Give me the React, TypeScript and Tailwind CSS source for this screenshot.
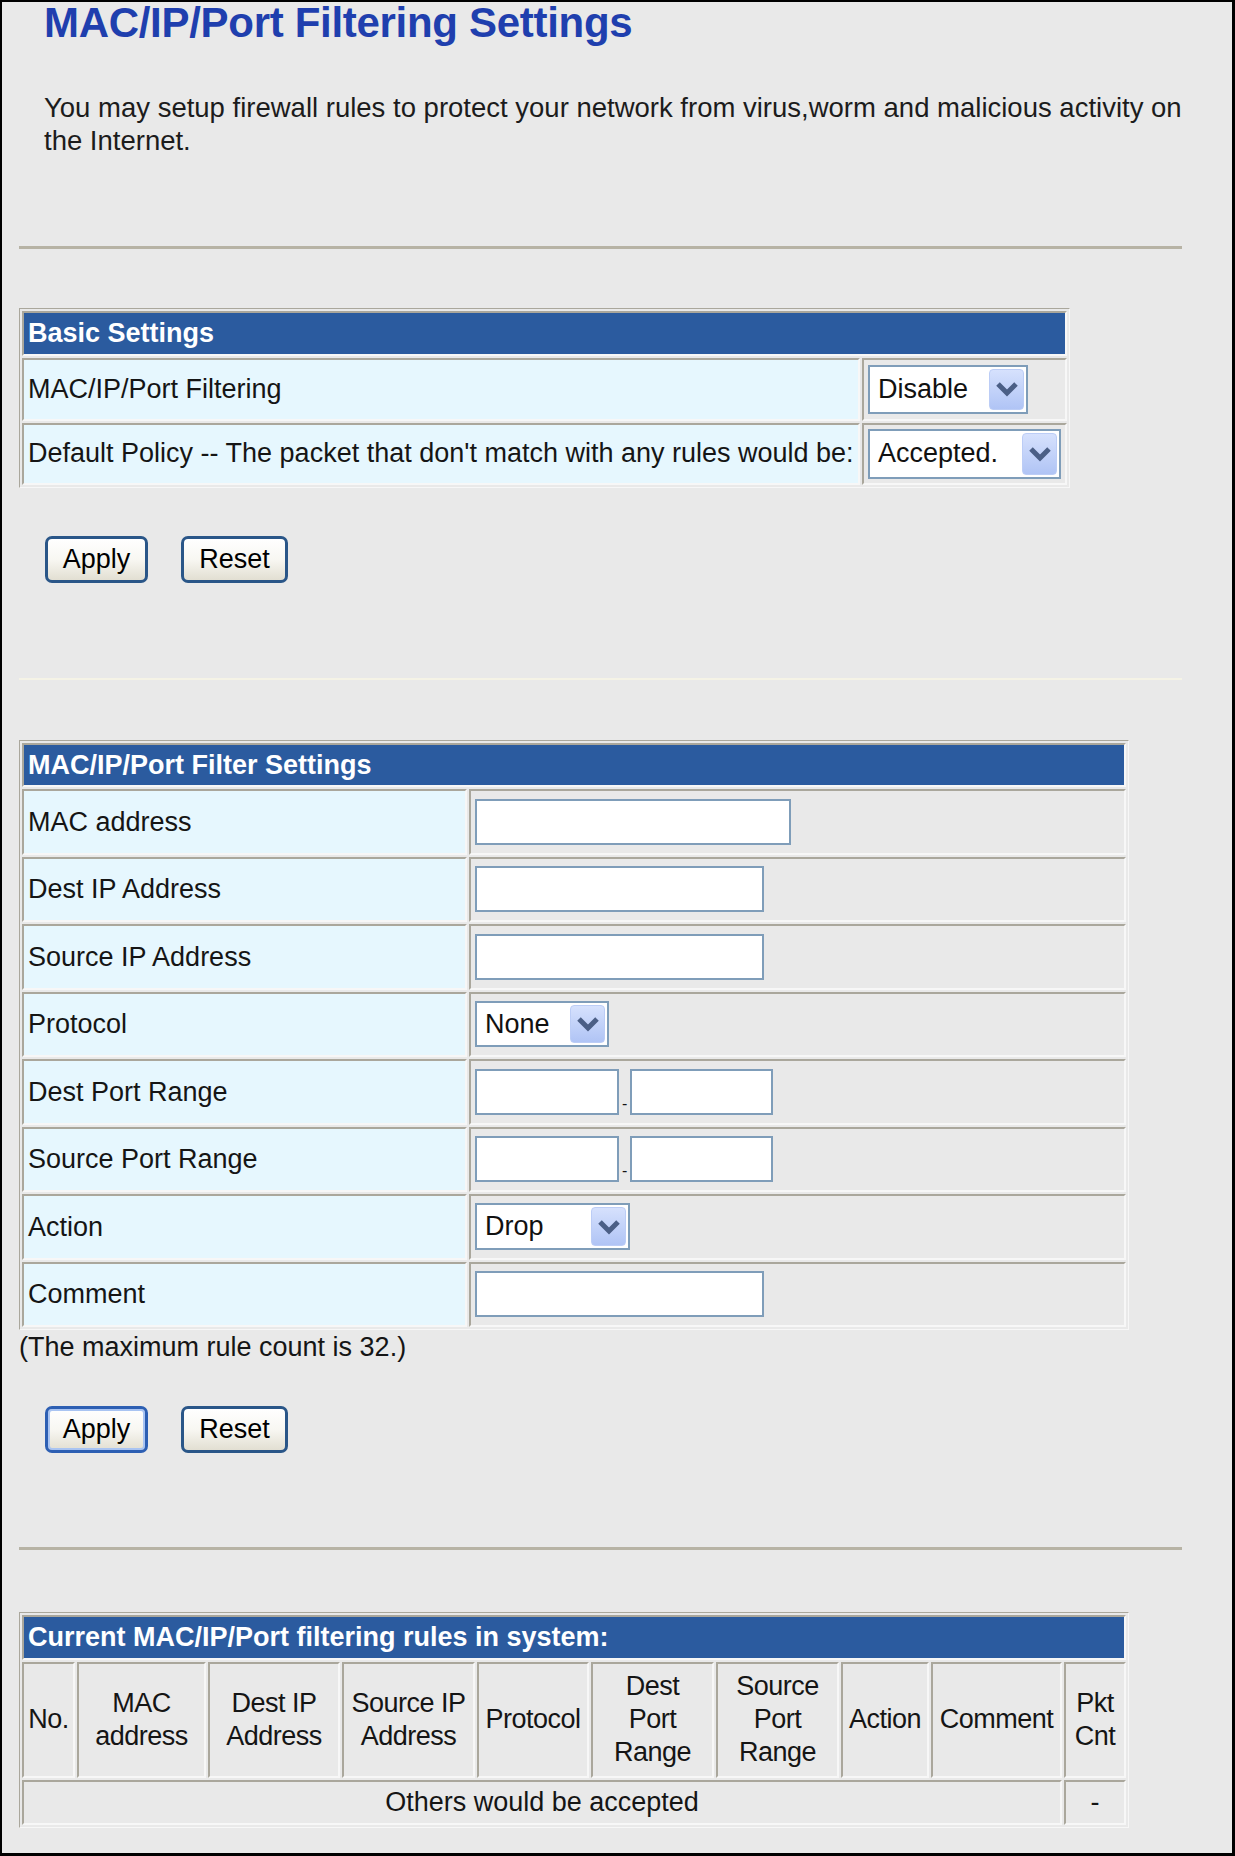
import React from "react";

const cell =
  "border-2 border-t-[#aaa79c] border-l-[#aaa79c] border-r-[#f7f7f7] border-b-[#f7f7f7]";

function Chevron() {
  return (
    <svg width="24" height="16" viewBox="0 0 24 16">
      <path d="M3 3l9 9 9-9" fill="none" stroke="#4b5f86" strokeWidth="5" strokeLinejoin="miter" />
    </svg>
  );
}

function XpSelect({ value, className }: { value: string; className: string }) {
  return (
    <div className={`flex items-center justify-between bg-white border-2 border-[#7f9db9] pl-[8px] pr-[2px] py-[2px] ${className}`}>
      <span className="text-[27px] leading-none text-[#111]">{value}</span>
      <span className="flex h-full w-[35px] items-center justify-center rounded-[4px] border border-[#bccdf6] bg-linear-to-b from-[#d6e1fd] to-[#b0c4f5]">
        <Chevron />
      </span>
    </div>
  );
}

function TextBox({ className }: { className: string }) {
  return <div className={`bg-white border-2 border-[#7f9db9] ${className}`} />;
}

function XpButton({ label, width, focused }: { label: string; width: string; focused?: boolean }) {
  return (
    <button
      className={`h-[47px] rounded-[7px] border-[3px] bg-linear-to-b from-white via-[#f8f7f2] to-[#e2dfd2] text-[27px] leading-none text-black ${width} ${
        focused ? "border-[#2d5fb3] shadow-[inset_0_0_0_2px_#a9c4f2]" : "border-[#2a5688]"
      }`}
    >
      {label}
    </button>
  );
}

function ButtonRow({ focused }: { focused?: boolean }) {
  return (
    <div className="ml-[43px] flex gap-[33px]">
      <XpButton label="Apply" width="w-[103px]" focused={focused} />
      <XpButton label="Reset" width="w-[107px]" />
    </div>
  );
}

function Header({ title, span }: { title: string; span: number }) {
  return (
    <tr>
      <td
        colSpan={span}
        className={`${cell} h-[44px] bg-[#2b5b9f] pl-[4px] text-[27px] font-bold text-white`}
      >
        {title}
      </td>
    </tr>
  );
}

const filterRows: { label: string; value: React.ReactNode }[] = [
  { label: "MAC address", value: <TextBox className="w-[316px] h-[46px]" /> },
  { label: "Dest IP Address", value: <TextBox className="w-[289px] h-[46px]" /> },
  { label: "Source IP Address", value: <TextBox className="w-[289px] h-[46px]" /> },
  { label: "Protocol", value: <XpSelect value="None" className="w-[134px] h-[46px]" /> },
  {
    label: "Dest Port Range",
    value: (
      <div className="flex items-end">
        <TextBox className="w-[144px] h-[46px]" />
        <span className="mx-[3px] text-[16px] leading-[22px]">-</span>
        <TextBox className="w-[143px] h-[46px]" />
      </div>
    ),
  },
  {
    label: "Source Port Range",
    value: (
      <div className="flex items-end">
        <TextBox className="w-[144px] h-[46px]" />
        <span className="mx-[3px] text-[16px] leading-[22px]">-</span>
        <TextBox className="w-[143px] h-[46px]" />
      </div>
    ),
  },
  { label: "Action", value: <XpSelect value="Drop" className="w-[155px] h-[47px]" /> },
  { label: "Comment", value: <TextBox className="w-[289px] h-[46px]" /> },
];

const ruleCols = [
  { w: "w-[53px]", label: ["No."] },
  { w: "w-[129px]", label: ["MAC", "address"] },
  { w: "w-[132px]", label: ["Dest IP", "Address"] },
  { w: "w-[133px]", label: ["Source IP", "Address"] },
  { w: "w-[112px]", label: ["Protocol"] },
  { w: "w-[123px]", label: ["Dest", "Port", "Range"] },
  { w: "w-[123px]", label: ["Source", "Port", "Range"] },
  { w: "w-[88px]", label: ["Action"] },
  { w: "w-[131px]", label: ["Comment"] },
  { w: "w-[62px]", label: ["Pkt", "Cnt"] },
];

export default function App() {
  return (
    <div className="w-[1235px] h-[1856px] overflow-hidden bg-[#e9e9e9] border-t-2 border-l-2 border-r-[3px] border-b-[3px] border-black font-['Liberation_Sans',Arial,sans-serif] text-[#151515]">
      <h1 className="ml-[42px] text-[42px] leading-[42px] font-bold text-[#1f3fae] tracking-[-0.3px]">
        MAC/IP/Port Filtering Settings
      </h1>

      <p className="ml-[42px] mt-[47px] text-[27.5px] leading-[33px] text-[#1c1c1c] whitespace-nowrap">
        You may setup firewall rules to protect your network from virus,worm and malicious activity on
        <br />
        the Internet.
      </p>

      <div className="ml-[17px] mt-[89px] h-[3px] w-[1163px] bg-[#b7b3a5]" />

      {/* basic settings */}
      <table className="ml-[17px] mt-[59px] w-[1049px] table-fixed border-separate border-spacing-[2px] border border-t-[#aaa79c] border-l-[#aaa79c] border-r-[#f7f7f7] border-b-[#f7f7f7] text-[27px]">
        <colgroup>
          <col className="w-[838px]" />
          <col className="w-[205px]" />
        </colgroup>
        <tbody>
          <Header title="Basic Settings" span={2} />
          <tr>
            <td className={`${cell} h-[63px] bg-[#e6f7fe] pl-[4px]`}>MAC/IP/Port Filtering</td>
            <td className={`${cell} pl-[4px]`}>
              <XpSelect value="Disable" className="w-[160px] h-[49px]" />
            </td>
          </tr>
          <tr>
            <td className={`${cell} h-[62px] bg-[#e6f7fe] pl-[4px] whitespace-nowrap`}>
              Default Policy -- The packet that don't match with any rules would be:
            </td>
            <td className={`${cell} pl-[4px]`}>
              <XpSelect value="Accepted." className="w-[193px] h-[50px]" />
            </td>
          </tr>
        </tbody>
      </table>

      <div className="mt-[48px]">
        <ButtonRow />
      </div>

      <div className="ml-[17px] mt-[95px] h-[2px] w-[1163px] bg-[#f5f3e6]" />

      {/* filter settings */}
      <table className="ml-[17px] mt-[60px] w-[1108px] table-fixed border-separate border-spacing-[2px] border border-t-[#aaa79c] border-l-[#aaa79c] border-r-[#f7f7f7] border-b-[#f7f7f7] text-[27px]">
        <colgroup>
          <col className="w-[445px]" />
          <col className="w-[657px]" />
        </colgroup>
        <tbody>
          <Header title="MAC/IP/Port Filter Settings" span={2} />
          {filterRows.map((r) => (
            <tr key={r.label}>
              <td className={`${cell} h-[65.5px] bg-[#e6f7fe] pl-[4px]`}>{r.label}</td>
              <td className={`${cell} pl-[4px]`}>{r.value}</td>
            </tr>
          ))}
        </tbody>
      </table>

      <p className="ml-[17px] mt-[2px] text-[27px] leading-[30px]">(The maximum rule count is 32.)</p>

      <div className="mt-[44px]">
        <ButtonRow focused />
      </div>

      <div className="ml-[17px] mt-[94px] h-[3px] w-[1163px] bg-[#b7b3a5]" />

      {/* current rules */}
      <table className="ml-[17px] mt-[62px] w-[1110px] table-fixed border-separate border-spacing-[2px] border border-t-[#aaa79c] border-l-[#aaa79c] border-r-[#f7f7f7] border-b-[#f7f7f7] text-[27px]">
        <colgroup>
          {ruleCols.map((c, i) => (
            <col key={i} className={c.w} />
          ))}
        </colgroup>
        <tbody>
          <Header title="Current MAC/IP/Port filtering rules in system:" span={10} />
          <tr>
            {ruleCols.map((c, i) => (
              <td key={i} className={`${cell} h-[116px] text-center leading-[33px] tracking-[-0.5px] whitespace-nowrap`}>
                {c.label.map((l, j) => (
                  <React.Fragment key={j}>
                    {j > 0 && <br />}
                    {l}
                  </React.Fragment>
                ))}
              </td>
            ))}
          </tr>
          <tr>
            <td colSpan={9} className={`${cell} h-[45px] text-center`}>
              Others would be accepted
            </td>
            <td className={`${cell} text-center`}>-</td>
          </tr>
        </tbody>
      </table>
    </div>
  );
}
